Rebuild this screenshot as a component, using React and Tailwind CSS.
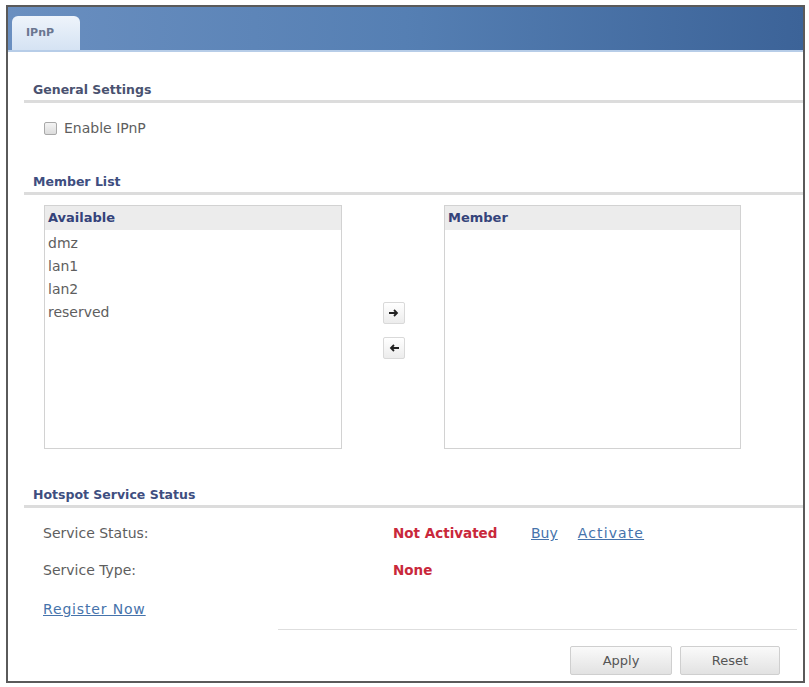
export default function App() {
  const font = { fontFamily: '"DejaVu Sans", "Open Sans", sans-serif' };
  const items = ['dmz', 'lan1', 'lan2', 'reserved'];

  return (
    <div className="w-full h-[687px] bg-white pt-[5px] pl-[6px]" style={font}>
      <div className="w-[799px] h-[678px] border-2 border-[#5a5a5a] flex flex-col text-[14px] text-[#5e5e5e]">
        {/* tab bar */}
        <div className="h-[43px] flex items-end pl-[4px] bg-gradient-to-r from-[#6a8fc0] via-[#557fb3] to-[#3c6398]">
          <div className="w-[68px] h-[34px] rounded-t-[6px] bg-gradient-to-b from-[#eef4fb] to-[#d5e3f3] flex items-center pl-[14px] text-[11px] font-bold text-[#6a7690]">
            IPnP
          </div>
        </div>
        <div className="h-[2px] bg-[#b7cde8]" />

        {/* General Settings */}
        <div className="ml-[16px] mt-[28px]">
          <div className="h-[20px] leading-[20px] pl-[9px] text-[12.5px] font-bold text-[#4a5270]">General Settings</div>
          <div className="h-[3px] bg-[#dcdcdc]" />
        </div>
        <div className="ml-[36px] mt-[17px] h-[16px] flex items-center gap-[7px]">
          <div className="w-[13px] h-[13px] border border-[#a9a9a9] bg-gradient-to-b from-[#f4f4f4] to-[#dcdcdc] rounded-[2px]" />
          <span className="leading-[16px]">Enable IPnP</span>
        </div>

        {/* Member List */}
        <div className="ml-[16px] mt-[36px]">
          <div className="h-[20px] leading-[20px] pl-[9px] text-[12.5px] font-bold text-[#3e4e80]">Member List</div>
          <div className="h-[3px] bg-[#dcdcdc]" />
        </div>
        <div className="flex mt-[10px] h-[244px]">
          <div className="ml-[36px] w-[298px] h-full border border-[#d2d2d2] flex flex-col">
            <div className="h-[24px] leading-[24px] bg-[#ececec] pl-[3px] text-[13px] font-bold text-[#34437a]">Available</div>
            <div className="pt-[2px]">
              {items.map((it) => (
                <div key={it} className="h-[23px] leading-[23px] pl-[3px]">{it}</div>
              ))}
            </div>
          </div>
          <div className="ml-[41px] w-[22px] pt-[97px] flex flex-col gap-[13px]">
            <button className="w-[22px] h-[22px] border border-[#d9d9d9] rounded-[2px] bg-gradient-to-b from-white to-[#ececec] flex items-center justify-center">
              <svg width="10" height="8" viewBox="0 0 10 8"><path d="M0 4h7M5 1l3 3-3 3" stroke="#222" strokeWidth="1.8" fill="none" /></svg>
            </button>
            <button className="w-[22px] h-[22px] border border-[#d9d9d9] rounded-[2px] bg-gradient-to-b from-white to-[#ececec] flex items-center justify-center">
              <svg width="10" height="8" viewBox="0 0 10 8"><path d="M10 4H3M5 1L2 4l3 3" stroke="#222" strokeWidth="1.8" fill="none" /></svg>
            </button>
          </div>
          <div className="ml-[39px] w-[297px] h-full border border-[#d2d2d2] flex flex-col">
            <div className="h-[24px] leading-[24px] bg-[#ececec] pl-[3px] text-[13px] font-bold text-[#34437a]">Member</div>
          </div>
        </div>

        {/* Hotspot Service Status */}
        <div className="ml-[16px] mt-[36px]">
          <div className="h-[20px] leading-[20px] pl-[9px] text-[12.5px] font-bold text-[#3e4e80]">Hotspot Service Status</div>
          <div className="h-[3px] bg-[#dcdcdc]" />
        </div>
        <div className="ml-[35px] mt-[14px] flex flex-col">
          <div className="h-[22px] leading-[22px] flex">
            <span className="w-[350px]">Service Status:</span>
            <span className="font-bold text-[13.5px] text-[#c9283b] w-[138px]">Not Activated</span>
            <a className="underline text-[#4673ab]">Buy</a>
            <a className="underline text-[#4673ab] ml-[20px] tracking-[0.08em]">Activate</a>
          </div>
          <div className="h-[22px] leading-[22px] flex mt-[15px]">
            <span className="w-[350px]">Service Type:</span>
            <span className="font-bold text-[13.5px] text-[#c9283b]">None</span>
          </div>
          <div className="h-[22px] leading-[22px] mt-[17px]">
            <a className="underline text-[#4673ab] tracking-[0.06em]">Register Now</a>
          </div>
        </div>
        <div className="ml-[270px] mr-[6px] mt-[9px] h-px bg-[#dedede]" />
        <div className="flex justify-end gap-[8px] mr-[23px] mt-[16px]">
          <button className="w-[102px] h-[29px] border border-[#cfcfcf] rounded-[2px] bg-gradient-to-b from-[#fafafa] to-[#e2e2e2] text-[13px] text-[#555]">Apply</button>
          <button className="w-[100px] h-[29px] border border-[#cfcfcf] rounded-[2px] bg-gradient-to-b from-[#fafafa] to-[#e2e2e2] text-[13px] text-[#555]">Reset</button>
        </div>
      </div>
    </div>
  );
}
